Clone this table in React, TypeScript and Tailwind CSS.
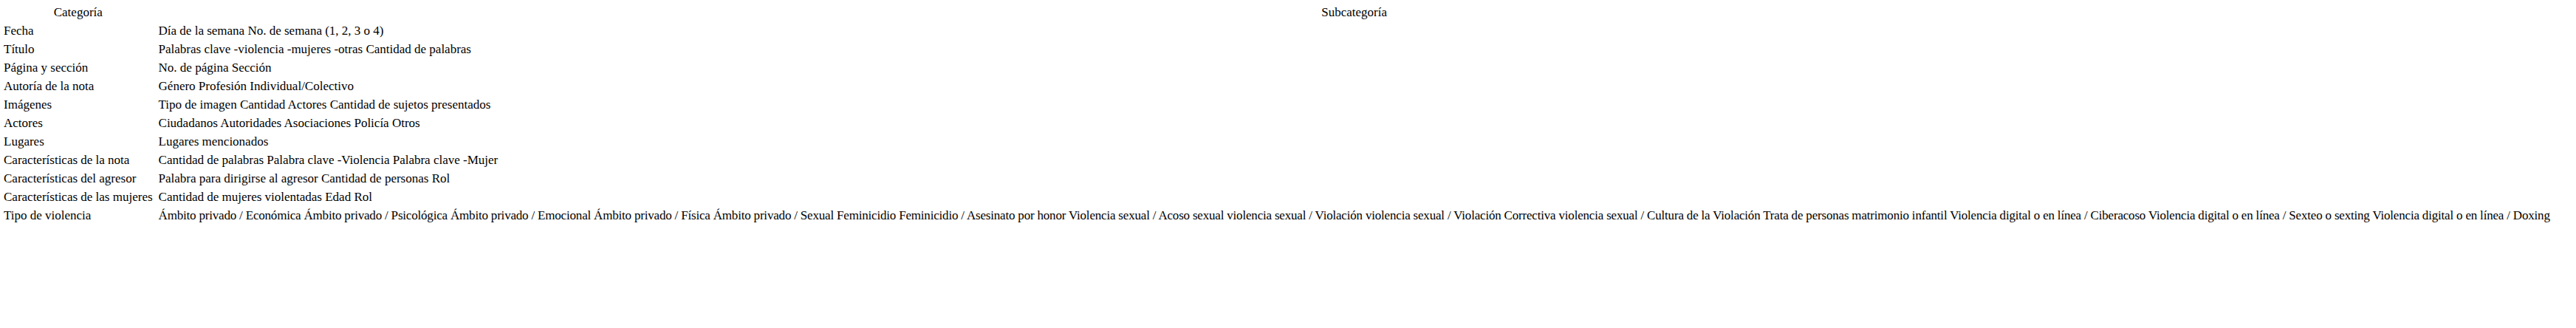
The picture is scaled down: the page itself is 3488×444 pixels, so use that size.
const rows: [string, string][] = [
  ['Fecha', 'Día de la semana No. de semana (1, 2, 3 o 4)'],
  ['Título', 'Palabras clave -violencia -mujeres -otras Cantidad de palabras'],
  ['Página y sección', 'No. de página Sección'],
  ['Autoría de la nota', 'Género Profesión Individual/Colectivo'],
  ['Imágenes', 'Tipo de imagen Cantidad Actores Cantidad de sujetos presentados'],
  ['Actores', 'Ciudadanos Autoridades Asociaciones Policía Otros'],
  ['Lugares', 'Lugares mencionados'],
  ['Características de la nota', 'Cantidad de palabras Palabra clave -Violencia Palabra clave -Mujer'],
  ['Características del agresor', 'Palabra para dirigirse al agresor Cantidad de personas Rol'],
  ['Características de las mujeres', 'Cantidad de mujeres violentadas Edad Rol'],
  [
    'Tipo de violencia',
    'Ámbito privado / Económica Ámbito privado / Psicológica Ámbito privado / Emocional Ámbito privado / Física Ámbito privado / Sexual Feminicidio Feminicidio / Asesinato por honor Violencia sexual / Acoso sexual violencia sexual / Violación violencia sexual / Violación Correctiva violencia sexual / Cultura de la Violación Trata de personas matrimonio infantil Violencia digital o en línea / Ciberacoso Violencia digital o en línea / Sexteo o sexting Violencia digital o en línea / Doxing',
  ],
];

export default function App() {
  return (
    <div className="min-h-[444px] bg-white pt-[3px] text-black font-['Liberation_Serif',serif] text-[17px] leading-[21px]">
      <table className="border-separate border-spacing-[2px] whitespace-nowrap">
        <thead>
          <tr>
            <th className="px-[3px] py-px font-normal text-center">Categoría</th>
            <th className="px-[3px] py-px font-normal text-center">Subcategoría</th>
          </tr>
        </thead>
        <tbody>
          {rows.map(([cat, sub], i) => (
            <tr key={cat}>
              <td className="px-[3px] py-px text-left">{cat}</td>
              <td className={i === rows.length - 1 ? 'px-[3px] py-px text-left tracking-[-0.19px]' : 'px-[3px] py-px text-left'}>
                {sub}
              </td>
            </tr>
          ))}
        </tbody>
      </table>
    </div>
  );
}
